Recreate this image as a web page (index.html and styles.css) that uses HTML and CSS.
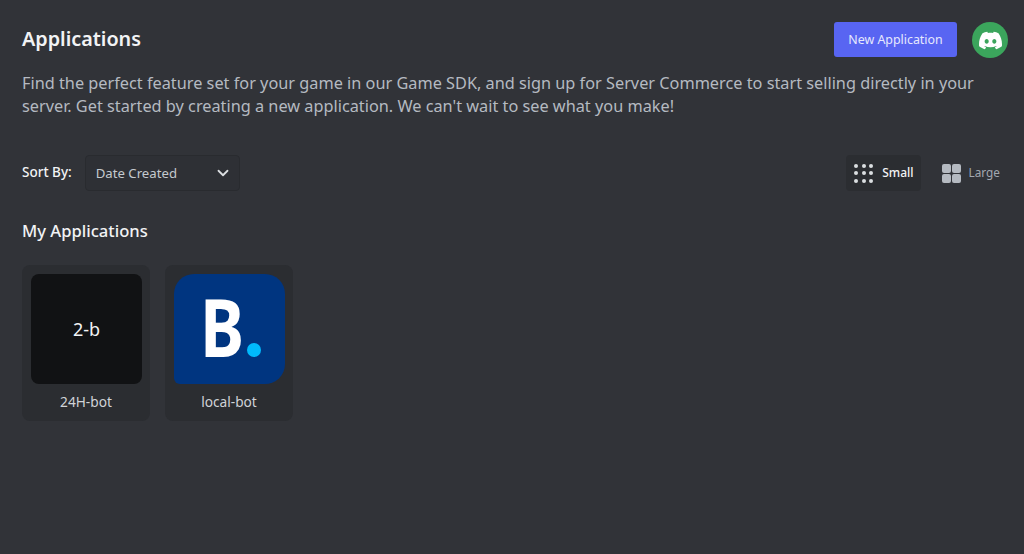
FILE: index.html
```html
<!DOCTYPE html>
<html lang="en">
<head>
    <meta charset="UTF-8">
    <title>Applications</title>
    <link rel="stylesheet" href="styles.css">
</head>
<body>
    <main class="page">
        <div class="top-row">
            <h1>Applications</h1>
            <div class="top-actions">
                <button class="new-button">New Application</button>
                <div class="avatar">
                    <svg viewBox="0 0 24 24" width="23" height="23"><path fill="#fff" d="M20.317 4.3698a19.7913 19.7913 0 00-4.8851-1.5152.0741.0741 0 00-.0785.0371c-.211.3753-.4447.8648-.6083 1.2495-1.8447-.2762-3.68-.2762-5.4868 0-.1636-.3933-.4058-.8742-.6177-1.2495a.077.077 0 00-.0785-.037 19.7363 19.7363 0 00-4.8852 1.515.0699.0699 0 00-.0321.0277C.5334 9.0458-.319 13.5799.0992 18.0578a.0824.0824 0 00.0312.0561c2.0528 1.5076 4.0413 2.4228 5.9929 3.0294a.0777.0777 0 00.0842-.0276c.4616-.6304.8731-1.2952 1.226-1.9942a.076.076 0 00-.0416-.1057c-.6528-.2476-1.2743-.5495-1.8722-.8923a.077.077 0 01-.0076-.1277c.1258-.0943.2517-.1923.3718-.2914a.0743.0743 0 01.0776-.0105c3.9278 1.7933 8.18 1.7933 12.0614 0a.0739.0739 0 01.0785.0095c.1202.099.246.1981.3728.2924a.077.077 0 01-.0066.1276 12.2986 12.2986 0 01-1.873.8914.0766.0766 0 00-.0407.1067c.3604.698.7719 1.3628 1.225 1.9932a.076.076 0 00.0842.0286c1.961-.6067 3.9495-1.5219 6.0023-3.0294a.077.077 0 00.0313-.0552c.5004-5.177-.8382-9.6739-3.5485-13.6604a.061.061 0 00-.0312-.0286zM8.02 15.3312c-1.1825 0-2.1569-1.0857-2.1569-2.419 0-1.3332.9555-2.4189 2.157-2.4189 1.2108 0 2.1757 1.0952 2.1568 2.419 0 1.3332-.9555 2.4189-2.1569 2.4189zm7.9748 0c-1.1825 0-2.1569-1.0857-2.1569-2.419 0-1.3332.9554-2.4189 2.1569-2.4189 1.2108 0 2.1757 1.0952 2.1568 2.419 0 1.3332-.946 2.4189-2.1568 2.4189Z"/></svg>
                </div>
            </div>
        </div>

        <p class="intro">Find the perfect feature set for your game in our Game SDK, and sign up for Server Commerce to start selling directly in your server. Get started by creating a new application. We can't wait to see what you make!</p>

        <div class="filter-row">
            <div class="sort">
                <span class="sort-label">Sort By:</span>
                <div class="select">
                    <span>Date Created</span>
                    <svg viewBox="0 0 24 24" width="18" height="18"><path fill="none" stroke="#dbdee1" stroke-width="2.4" stroke-linecap="round" stroke-linejoin="round" d="M6 9l6 6 6-6"/></svg>
                </div>
            </div>
            <div class="size-toggle">
                <div class="size-option active">
                    <div class="dots">
                        <i></i><i></i><i></i>
                        <i></i><i></i><i></i>
                        <i></i><i></i><i></i>
                    </div>
                    <span>Small</span>
                </div>
                <div class="size-option">
                    <div class="squares">
                        <i></i><i></i>
                        <i></i><i></i>
                    </div>
                    <span>Large</span>
                </div>
            </div>
        </div>

        <h2>My Applications</h2>

        <div class="app-grid">
            <div class="app-card">
                <div class="app-icon icon-text">2-b</div>
                <div class="app-name">24H-bot</div>
            </div>
            <div class="app-card">
                <div class="app-icon icon-logo">
                    <span class="logo-letter">B</span>
                    <span class="logo-dot"></span>
                </div>
                <div class="app-name">local-bot</div>
            </div>
        </div>
    </main>
</body>
</html>
```

FILE: styles.css
```css
* {
    box-sizing: border-box;
    margin: 0;
    padding: 0;
}
body {
    background-color: #313338;
    font-family: 'Noto Sans', sans-serif;
    color: #f2f3f5;
    height: 554px;
    overflow: hidden;
}
.page {
    padding: 22px 16px 0 22px;
}
.top-row {
    display: flex;
    justify-content: space-between;
    height: 36px;
}
h1 {
    font-size: 19.8px;
    font-weight: 600;
    line-height: 34px;
    color: #f2f3f5;
}
.top-actions {
    display: flex;
    gap: 15px;
}
.new-button {
    width: 123px;
    height: 35px;
    background-color: #5865f2;
    border: none;
    border-radius: 3px;
    color: #e6e8fd;
    font-family: inherit;
    font-size: 12.4px;
}
.avatar {
    width: 36px;
    height: 36px;
    border-radius: 50%;
    background-color: #3ba55c;
    display: flex;
    justify-content: center;
    align-items: center;
}
.intro {
    margin-top: 14px;
    font-size: 16.3px;
    line-height: 23px;
    color: #b5bac1;
    max-width: 970px;
}
.filter-row {
    display: flex;
    justify-content: space-between;
    align-items: center;
    margin-top: 37px;
}
.sort {
    display: flex;
    align-items: center;
    gap: 13px;
}
.sort-label {
    font-size: 13.5px;
    font-weight: 500;
    color: #f2f3f5;
    padding-bottom: 2px;
}
.select {
    width: 155px;
    height: 36px;
    background-color: #2e3035;
    border: 1px solid #292b2f;
    border-radius: 4px;
    padding: 0 7px 0 10px;
    display: flex;
    justify-content: space-between;
    align-items: center;
    font-size: 13.2px;
    color: #c4c9ce;
}
.size-toggle {
    display: flex;
    gap: 13px;
}
.size-option {
    height: 36px;
    padding: 0 8px;
    border-radius: 4px;
    display: flex;
    align-items: center;
    gap: 8px;
    font-size: 11.8px;
    color: #a3a8b0;
}
.size-option span {
    padding-bottom: 2px;
}
.size-option.active {
    gap: 9px;
    padding-right: 7px;
    background-color: #2b2d31;
    color: #f2f3f5;
    font-size: 12px;
    font-weight: 500;
}
.dots {
    display: grid;
    grid-template-columns: repeat(3, 4px);
    gap: 3.5px;
}
.dots i {
    width: 4px;
    height: 4px;
    border-radius: 50%;
    background-color: #dbdee1;
}
.squares {
    display: grid;
    grid-template-columns: repeat(2, 9px);
    gap: 1px;
}
.squares i {
    width: 9px;
    height: 9px;
    border-radius: 2px;
    background-color: #b5bac1;
}
h2 {
    margin-top: 28px;
    font-size: 16.6px;
    font-weight: 500;
    line-height: 24px;
    color: #f2f3f5;
}
.app-grid {
    display: flex;
    gap: 15px;
    margin-top: 22px;
}
.app-card {
    width: 128px;
    height: 156px;
    background-color: #2b2d31;
    border-radius: 8px;
    padding: 9px 0 0 9px;
}
.app-icon {
    width: 111px;
    height: 110px;
    border-radius: 8px;
}
.icon-text {
    background-color: #111214;
    color: #f2f3f5;
    font-size: 18px;
    font-weight: 400;
    display: flex;
    justify-content: center;
    align-items: center;
}
.icon-logo {
    position: relative;
    background-color: #003580;
    border-radius: 20px 20px 20px 6px;
}
.logo-letter {
    position: absolute;
    left: 26px;
    top: 2px;
    font-size: 80px;
    font-weight: 700;
    line-height: 100px;
    color: #fff;
    transform: scaleX(0.83);
    transform-origin: left;
}
.logo-dot {
    position: absolute;
    left: 73px;
    top: 69px;
    width: 14px;
    height: 14px;
    border-radius: 50%;
    background-color: #00bafc;
}
.app-name {
    margin-top: 9px;
    padding-right: 9px;
    font-size: 13.7px;
    line-height: 18px;
    font-weight: 400;
    text-align: center;
    color: #d0d3d8;
}
```
